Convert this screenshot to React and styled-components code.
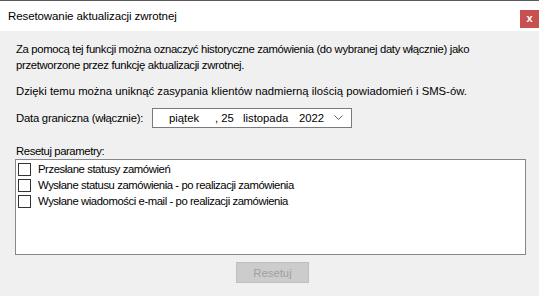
import React from 'react';
import styled, { createGlobalStyle } from 'styled-components';

const Global = createGlobalStyle`
  html, body { margin: 0; padding: 0; background: #f0f0f0; }
  body { font-family: "Liberation Sans", Arial, sans-serif; font-size: 11.3px; color: #000; }
`;

const Window = styled.div`
  width: 539px;
  height: 296px;
  display: flex;
  flex-direction: column;
  background: #f0f0f0;
  overflow: hidden;
`;

const TitleBar = styled.div`
  height: 30px;
  border-top: 1px solid #5a5a5a;
  background: #fff;
  display: flex;
  align-items: center;
  justify-content: space-between;
  padding-left: 8px;
`;

const Title = styled.span`
  font-size: 11.5px;
  color: #000;
  letter-spacing: -0.1px;
`;

const CloseBtn = styled.div`
  width: 19px;
  height: 18px;
  margin-top: 5px;
  background: #c75050;
  color: #fff;
  font-weight: bold;
  font-size: 11px;
  display: flex;
  align-items: center;
  justify-content: center;
  line-height: 1;
`;

const Content = styled.div`
  display: flex;
  flex-direction: column;
  padding: 10px 13px 0 16px;
`;

const Para = styled.p`
  margin: 0;
  margin-top: ${p => p.top || 0}px;
  line-height: 16px;
  white-space: nowrap;
`;

const Tight = styled.span`
  letter-spacing: ${p => p.ls}px;
`;

const DateRow = styled.div`
  display: flex;
  align-items: center;
  margin-top: 9px;
`;

const Label = styled.span`
  width: 136px;
  letter-spacing: -0.23px;
`;

const DateBox = styled.div`
  width: 198px;
  height: 18px;
  border: 1px solid #7a7a7a;
  background: #fff;
  display: flex;
  align-items: center;
  position: relative;
`;

const Part = styled.span`
  position: absolute;
  left: ${p => p.x}px;
`;

const Chevron = styled.svg`
  position: absolute;
  right: 8px;
  top: 6px;
`;

const GroupLabel = styled.div`
  margin-top: 16px;
  line-height: 14px;
  letter-spacing: -0.4px;
`;

const ListBox = styled.div`
  margin-top: 1px;
  margin-left: -1px;
  width: 509px;
  height: 93px;
  border: 1px solid #828790;
  background: #fff;
  padding-top: 1px;
`;

const Row = styled.div`
  height: 16px;
  display: flex;
  align-items: center;
  padding-left: 2px;
  letter-spacing: -0.42px;
`;

const Check = styled.span`
  width: 11px;
  height: 11px;
  border: 1px solid #333;
  background: #fff;
  margin-right: 7px;
`;

const Footer = styled.div`
  display: flex;
  justify-content: center;
  padding-top: 7px;
`;

const Button = styled.div`
  width: 71px;
  height: 19px;
  margin-left: 6px;
  background: #cccccc;
  border: 1px solid #bfbfbf;
  color: #a0a0a0;
  display: flex;
  align-items: center;
  justify-content: center;
`;

const options = [
  'Przesłane statusy zamówień',
  'Wysłane statusu zamówienia - po realizacji zamówienia',
  'Wysłane wiadomości e-mail - po realizacji zamówienia',
];

export default function App() {
  return (
    <Window>
      <Global />
      <TitleBar>
        <Title>Resetowanie aktualizacji zwrotnej</Title>
        <CloseBtn>x</CloseBtn>
      </TitleBar>
      <Content>
        <Para>
          <Tight ls={-0.33}>Za pomocą tej funkcji można oznaczyć historyczne zamówienia (do wybranej daty włącznie) jako</Tight>
          <br />
          <Tight ls={-0.33}>przetworzone przez funkcję aktualizacji zwrotnej.</Tight>
        </Para>
        <Para top={10}>Dzięki temu można uniknąć zasypania klientów nadmierną ilością powiadomień i SMS-ów.</Para>
        <DateRow>
          <Label>Data graniczna (włącznie):</Label>
          <DateBox>
            <Part x={16}>piątek</Part>
            <Part x={62}>, 25</Part>
            <Part x={90}>listopada</Part>
            <Part x={146}>2022</Part>
            <Chevron width="9" height="6" viewBox="0 0 9 6">
              <path d="M0.5 0.5 L4.5 4.5 L8.5 0.5" fill="none" stroke="#606060" strokeWidth="1" />
            </Chevron>
          </DateBox>
        </DateRow>
        <GroupLabel>Resetuj parametry:</GroupLabel>
        <ListBox>
          {options.map(o => (
            <Row key={o}>
              <Check />
              {o}
            </Row>
          ))}
        </ListBox>
      </Content>
      <Footer>
        <Button>Resetuj</Button>
      </Footer>
    </Window>
  );
}
